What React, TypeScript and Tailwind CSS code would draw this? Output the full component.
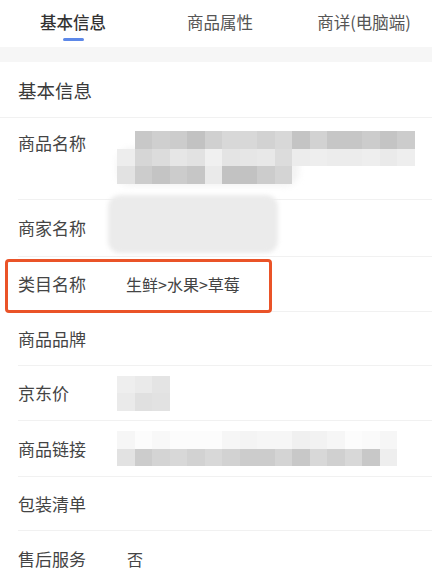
import React from "react";

const F = { fontFamily: '"Noto Sans CJK SC", "Noto Sans", sans-serif' };

function Mosaic({ rows }: { rows: { offset: number; cells: string[] }[] }) {
  return (
    <div className="flex flex-col blur-[0.6px]">
      {rows.map((r, i) => (
        <div key={i} className="flex h-[17.5px]">
          {Array.from({ length: r.offset }).map((_, k) => (
            <div key={"o" + k} className="w-[17.5px] h-full" />
          ))}
          {r.cells.map((c, j) => (
            <div key={j} className="w-[17.5px] h-full" style={{ backgroundColor: "#" + c }} />
          ))}
        </div>
      ))}
    </div>
  );
}

function Row({ label, children, h = "h-[55px]" }: { label: string; children?: React.ReactNode; h?: string }) {
  return (
    <div className={`ml-[18px] ${h} flex items-center border-b border-[#f1f1f1]`}>
      <div className="w-[99px] shrink-0 text-[17px] leading-6 text-[#444]">{label}</div>
      <div className="flex-1 flex items-center">{children}</div>
    </div>
  );
}

export default function App() {
  return (
    <div className="w-[432px] h-[578px] bg-white overflow-hidden" style={F}>
      {/* Tabs */}
      <div className="h-[47px] flex pt-[10px]">
        <div className="w-[146px] flex flex-col items-center">
          <span className="text-[16.5px] leading-6 text-[#333] font-medium">基本信息</span>
          <span className="mt-[4px] w-[21px] h-[3px] rounded-full bg-[#5d88e8]" />
        </div>
        <div className="w-[148px] flex justify-center">
          <span className="text-[16.5px] leading-6 text-[#555]">商品属性</span>
        </div>
        <div className="flex-1 flex justify-center pl-[2px]">
          <span className="text-[16.5px] leading-6 text-[#555]">商详(电脑端)</span>
        </div>
      </div>
      <div className="h-[15px] bg-[#f6f6f6]" />

      {/* Section header */}
      <div className="h-[56px] flex items-center pl-[18px] border-b border-[#f1f1f1]">
        <span className="text-[18.5px] leading-6 text-[#3a3a3a]">基本信息</span>
      </div>

      {/* 商品名称 */}
      <div className="ml-[18px] h-[82px] flex items-start pt-[13px] border-b border-[#f1f1f1]">
        <div className="w-[99px] shrink-0 text-[17px] leading-6 text-[#444]">商品名称</div>
        <div className="relative">
          <div className="absolute left-0 top-[17px] w-[182px] h-[38px] rounded-[14px] bg-[#f3f3f3] blur-[3px]" />
          <div className="relative">
            <Mosaic
              rows={[
                { offset: 1, cells: ["c8c8c8", "cfcfcf", "cccccc", "c2c2c2", "d0d0d0", "d8d8d8", "d8d8d8", "d2d2d2", "d8d8d8", "c4c4c4", "d2d2d2", "c6c6c6", "c6c6c6", "cccccc", "c4c4c4", "cccccc"] },
                { offset: 0, cells: ["ededed", "d6d6d6", "dcdcdc", "e6e6e6", "e2e2e2", "f0f0f0", "e4e4e4", "e6e6e6", "e8e8e8", "dcdcdc", "ececec", "eeeeee", "ececec", "ececec", "eeeeee", "eaeaea", "eeeeee"] },
                { offset: 0, cells: ["e2e2e2", "cccccc", "c4c4c4", "cccccc", "c6c6c6", "eaeaea", "c2c2c2", "c2c2c2", "cccccc", "d4d4d4"] },
              ]}
            />
          </div>
        </div>
      </div>

      {/* 商家名称 */}
      <Row label="商家名称" h="h-[57px]">
        <div className="ml-[-9px] mb-[8px] w-[170px] h-[58px] rounded-[12px] bg-[#ebebeb] blur-[2px]" />
      </Row>

      {/* 类目名称 */}
      <div className="relative">
        <Row label="类目名称" h="h-[55px]">
          <span className="ml-[9px] text-[16px] leading-6 text-[#444]">生鲜&gt;水果&gt;草莓</span>
        </Row>
        <div className="absolute left-[5px] top-[2px] w-[267px] h-[54px] border-[3px] border-[#ea5328] rounded-[4px]" />
      </div>

      <Row label="商品品牌" h="h-[54px]" />

      <Row label="京东价">
        <Mosaic
          rows={[
            { offset: 0, cells: ["eeeeee", "eaeaea", "e4e4e4"] },
            { offset: 0, cells: ["eaeaea", "e0e0e0", "e2e2e2"] },
          ]}
        />
      </Row>

      <Row label="商品链接" h="h-[56px]">
        <Mosaic
          rows={[
            { offset: 0, cells: ["f6f6f6", "fcfcfc", "f8f8f8", "fcfcfc", "fcfcfc", "fcfcfc", "f6f6f6", "f4f4f4", "f6f6f6", "f6f6f6", "f0f0f0", "f2f2f2", "f6f6f6", "fcfcfc", "fafafa", "f6f6f6"] },
            { offset: 0, cells: ["e2e2e2", "cccccc", "d4d4d4", "d8d8d8", "d2d2d2", "d8d8d8", "d2d2d2", "cccccc", "cccccc", "d4d4d4", "c8c8c8", "d8d8d8", "d0d0d0", "d8d8d8", "c8c8c8", "eeeeee"] },
          ]}
        />
      </Row>

      <Row label="包装清单" h="h-[54px]" />

      <div className="ml-[18px] h-[55px] flex items-center">
        <div className="w-[99px] shrink-0 text-[17px] leading-6 text-[#444]">售后服务</div>
        <span className="ml-[10px] text-[16px] leading-6 text-[#444]">否</span>
      </div>
    </div>
  );
}
